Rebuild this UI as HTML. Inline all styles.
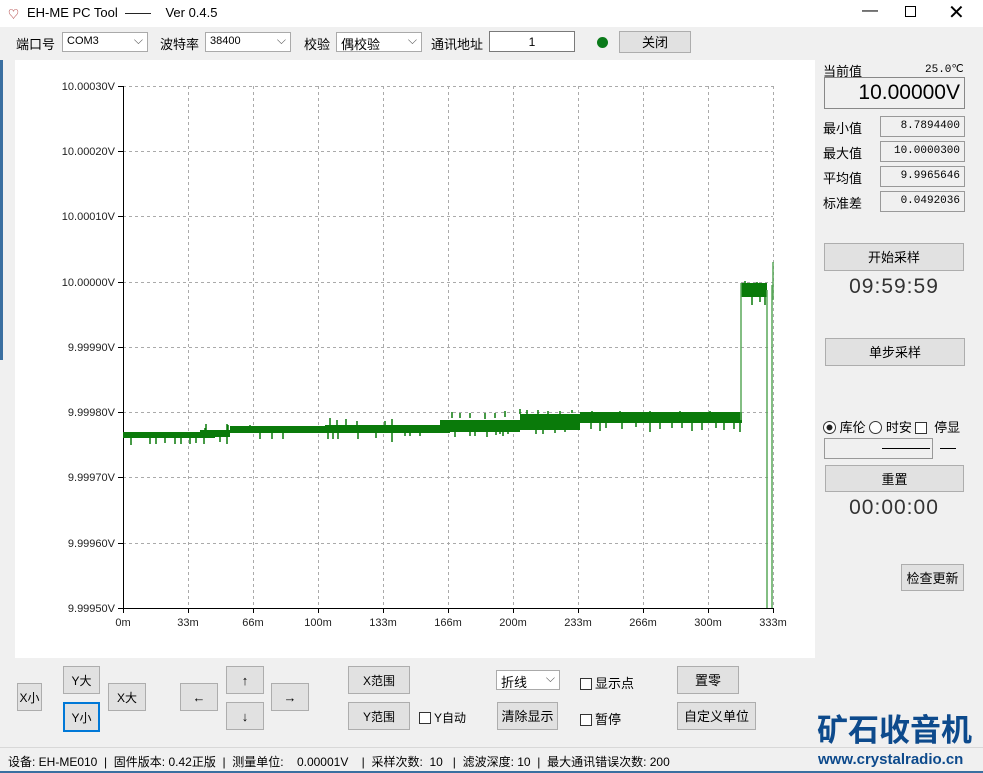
<!DOCTYPE html>
<html><head><meta charset="utf-8"><style>
*{margin:0;padding:0;box-sizing:border-box}
html,body{width:983px;height:773px;overflow:hidden}
body{background:#f0f0f0;font-family:"Liberation Sans","Noto Sans CJK SC",sans-serif;font-size:13px;color:#000;position:relative}
.a{position:absolute}
.btn{position:absolute;background:#e1e1e1;border:1px solid #adadad;text-align:center;font-size:13px;line-height:1}
.sel{position:absolute;background:#fff;border:1px solid #aaa;height:20px;font-size:11px;padding:2px 4px}
.sel:after{content:"⌵";position:absolute;right:4px;top:0;color:#555;font-size:12px}
.box{position:absolute;background:#f0f0f0;border:1px solid #999;text-align:right;font-family:"Liberation Mono",monospace;font-size:11px;padding:3px 4px}
.cb{display:inline-block;width:12px;height:12px;border:1px solid #333;background:#fff;vertical-align:-2px;margin-right:3px}
</style></head><body>
<div class="a" style="left:0;top:0;width:983px;height:27px;background:#fff"></div>
<div class="a" style="left:8px;top:6px;font-size:11px;color:#a33">♡</div>
<div class="a" style="left:27px;top:5px;font-size:13px">EH-ME PC Tool &nbsp;—— &nbsp;&nbsp;&nbsp;Ver 0.4.5</div>
<div class="a" style="left:862px;top:2px;font-size:16px">—</div>
<div class="a" style="left:905px;top:6px;width:11px;height:11px;border:1px solid #000"></div>
<div class="a" style="left:948px;top:0px;font-size:20px;font-weight:300">✕</div>
<div class="a" style="left:0;top:60px;width:3px;height:300px;background:#3a6fa0"></div>
<div class="a" style="left:0;top:771px;width:983px;height:2px;background:#3a6fa0"></div>

<div class="a" style="left:16px;top:34px">端口号</div>
<div class="sel" style="left:62px;top:32px;width:86px">COM3</div>
<div class="a" style="left:160px;top:34px">波特率</div>
<div class="sel" style="left:205px;top:32px;width:86px">38400</div>
<div class="a" style="left:304px;top:34px">校验</div>
<div class="sel" style="left:336px;top:32px;width:86px;font-size:13px;padding-top:1px">偶校验</div>
<div class="a" style="left:431px;top:34px">通讯地址</div>
<div class="a" style="left:489px;top:31px;width:86px;height:21px;background:#fff;border:1px solid #7a7a7a;text-align:center;font-size:12px;padding-top:3px">1</div>
<div class="a" style="left:597px;top:37px;width:11px;height:11px;border-radius:50%;background:#0a7a1a"></div>
<div class="btn" style="left:619px;top:31px;width:72px;height:22px;padding-top:4px">关闭</div>

<div class="a" style="left:15px;top:60px;width:800px;height:598px;background:#fff"></div>
<svg class="a" style="left:0;top:0" width="815" height="660">
<g stroke="#aaa" stroke-dasharray="3,3" stroke-width="1">
<line x1="123" y1="86.5" x2="773" y2="86.5"/><line x1="123" y1="151.5" x2="773" y2="151.5"/><line x1="123" y1="216.5" x2="773" y2="216.5"/><line x1="123" y1="282.5" x2="773" y2="282.5"/><line x1="123" y1="347.5" x2="773" y2="347.5"/><line x1="123" y1="412.5" x2="773" y2="412.5"/><line x1="123" y1="477.5" x2="773" y2="477.5"/><line x1="123" y1="543.5" x2="773" y2="543.5"/>
<line x1="188.5" y1="86" x2="188.5" y2="608"/><line x1="253.5" y1="86" x2="253.5" y2="608"/><line x1="318.5" y1="86" x2="318.5" y2="608"/><line x1="383.5" y1="86" x2="383.5" y2="608"/><line x1="448.5" y1="86" x2="448.5" y2="608"/><line x1="513.5" y1="86" x2="513.5" y2="608"/><line x1="578.5" y1="86" x2="578.5" y2="608"/><line x1="643.5" y1="86" x2="643.5" y2="608"/><line x1="708.5" y1="86" x2="708.5" y2="608"/><line x1="773.5" y1="86" x2="773.5" y2="608"/>
</g>
<g stroke="#000"><line x1="123.5" y1="86" x2="123.5" y2="608"/><line x1="123" y1="608.5" x2="774" y2="608.5"/>
<path d="M118 86.5h5M118 151.5h5M118 216.5h5M118 282.5h5M118 347.5h5M118 412.5h5M118 477.5h5M118 543.5h5M118 608.5h5M123.5 608v5M188.5 608v5M253.5 608v5M318.5 608v5M383.5 608v5M448.5 608v5M513.5 608v5M578.5 608v5M643.5 608v5M708.5 608v5M773.5 608v5"/></g>
<g font-size="11" fill="#222" text-anchor="end" font-family="Liberation Sans">
<text x="115" y="90">10.00030V</text><text x="115" y="155">10.00020V</text><text x="115" y="220">10.00010V</text><text x="115" y="286">10.00000V</text><text x="115" y="351">9.99990V</text><text x="115" y="416">9.99980V</text><text x="115" y="481">9.99970V</text><text x="115" y="547">9.99960V</text><text x="115" y="612">9.99950V</text></g>
<g font-size="11" fill="#222" text-anchor="middle" font-family="Liberation Sans">
<text x="123" y="626">0m</text><text x="188" y="626">33m</text><text x="253" y="626">66m</text><text x="318" y="626">100m</text><text x="383" y="626">133m</text><text x="448" y="626">166m</text><text x="513" y="626">200m</text><text x="578" y="626">233m</text><text x="643" y="626">266m</text><text x="708" y="626">300m</text><text x="773" y="626">333m</text></g>
<g fill="#0a7a0a">
<rect x="123" y="432" width="92" height="6"/><rect x="200" y="430" width="30" height="7"/>
<rect x="230" y="426" width="95" height="7"/><rect x="325" y="425" width="125" height="8"/>
<rect x="440" y="420" width="80" height="12"/><rect x="520" y="414" width="60" height="16"/><rect x="580" y="412" width="162" height="11"/>
<rect x="741" y="283" width="26" height="14"/>
</g>
<g stroke="#0a7a0a" stroke-width="1.5">
<path d="M131 437v8M150 437v7M156 437v7M165 437v6M175 437v7M181 437v7M190 437v7M196 437v6M204 437v7M220 437v5M227 437v7M205 436v-8M206 430v-6M227 432v-8M250 430v-5M260 433v6M272 433v6M283 433v6M228 433v-8M328 433v6M333 433v6M338 432v7M358 433v6M376 433v5M392 433v9M392 425v-6M405 432v4M410 432v4M420 432v4M330 426v-8M337 426v-6M346 426v-7M357 426v-5M385 425v-4M470 430v6M455 431v6M475 431v5M487 430v7M496 430v5M503 430v6M500 430v4M508 430v4M536 429v5M543 428v6M555 428v5M565 428v4M452 418v-6M460 418v-5M470 418v-5M485 419v-6M495 418v-5M505 417v-6M520 414v-5M527 414v-4M538 414v-4M548 414v-3M560 414v-3M572 413v-3M591 423v6M600 423v8M606 423v5M622 423v6M636 423v4M650 423v9M660 423v6M672 423v5M682 423v5M692 423v8M702 423v7M716 423v5M724 423v7M734 423v6M740 423v9M592 411v3M620 411v3M650 411v3M680 411v3M710 411v3M752 297v8M760 297v5M765 297v8M745 284v-3M757 284v-2"/>
</g>
<g stroke="#5aa85a" stroke-width="1.5" fill="none">
<path d="M741 420V283M767 290V608M772 285V608M773 262V300"/></g>
</svg>

<div class="a" style="left:823px;top:61px">当前值</div>
<div class="a" style="left:925px;top:62px;font-size:11px;font-family:'Liberation Mono',monospace">25.0℃</div>
<div class="a" style="left:824px;top:77px;width:141px;height:32px;border:1px solid #888;font-size:21px;text-align:right;padding:3px 4px 0 0">10.00000V</div>
<div class="a" style="left:823px;top:118px">最小值</div><div class="box" style="left:880px;top:116px;width:85px;height:21px">8.7894400</div>
<div class="a" style="left:823px;top:143px">最大值</div><div class="box" style="left:880px;top:141px;width:85px;height:21px">10.0000300</div>
<div class="a" style="left:823px;top:168px">平均值</div><div class="box" style="left:880px;top:166px;width:85px;height:21px">9.9965646</div>
<div class="a" style="left:823px;top:193px">标准差</div><div class="box" style="left:880px;top:191px;width:85px;height:21px">0.0492036</div>
<div class="btn" style="left:824px;top:243px;width:140px;height:28px;padding-top:7px">开始采样</div>
<div class="a" style="left:824px;top:275px;width:140px;text-align:center;font-size:21px;color:#333;letter-spacing:1px">09:59:59</div>
<div class="btn" style="left:825px;top:338px;width:140px;height:28px;padding-top:7px">单步采样</div>
<div class="a" style="left:823px;top:417px;font-size:13px"><span style="display:inline-block;width:13px;height:13px;border:1px solid #333;border-radius:50%;background:radial-gradient(#222 35%,#fff 40%);vertical-align:-2px"></span> 库伦 <span style="display:inline-block;width:13px;height:13px;border:1px solid #333;border-radius:50%;vertical-align:-2px;background:#fff"></span> 时安 <span class="cb"></span> 停显</div>
<div class="a" style="left:824px;top:438px;width:109px;height:21px;border:1px solid #999"></div>
<div class="a" style="left:882px;top:448px;width:48px;border-top:1px solid #000"></div>
<div class="a" style="left:940px;top:448px;width:16px;border-top:1px solid #000"></div>
<div class="btn" style="left:825px;top:465px;width:139px;height:27px;padding-top:7px">重置</div>
<div class="a" style="left:824px;top:496px;width:140px;text-align:center;font-size:21px;color:#333;letter-spacing:1px">00:00:00</div>
<div class="btn" style="left:901px;top:564px;width:63px;height:27px;padding-top:7px">检查更新</div>

<div class="btn" style="left:17px;top:683px;width:25px;height:28px;padding-top:8px;font-size:12px">X小</div>
<div class="btn" style="left:63px;top:666px;width:37px;height:28px;padding-top:8px;font-size:12px">Y大</div>
<div class="btn" style="left:63px;top:702px;width:37px;height:30px;padding-top:8px;font-size:12px;border:2px solid #0078d7">Y小</div>
<div class="btn" style="left:108px;top:683px;width:38px;height:28px;padding-top:8px;font-size:12px">X大</div>
<div class="btn" style="left:180px;top:683px;width:38px;height:28px;padding-top:7px">←</div>
<div class="btn" style="left:226px;top:666px;width:38px;height:28px;padding-top:7px">↑</div>
<div class="btn" style="left:226px;top:702px;width:38px;height:28px;padding-top:7px">↓</div>
<div class="btn" style="left:271px;top:683px;width:38px;height:28px;padding-top:7px">→</div>
<div class="btn" style="left:348px;top:666px;width:62px;height:28px;padding-top:8px;font-size:12px">X范围</div>
<div class="btn" style="left:348px;top:702px;width:62px;height:28px;padding-top:8px;font-size:12px">Y范围</div>
<div class="a" style="left:419px;top:709px;font-size:12px"><span class="cb"></span>Y自动</div>
<div class="sel" style="left:496px;top:670px;width:64px;font-size:13px;padding-top:1px">折线</div>
<div class="a" style="left:580px;top:673px"><span class="cb"></span>显示点</div>
<div class="btn" style="left:497px;top:702px;width:61px;height:28px;padding-top:7px">清除显示</div>
<div class="a" style="left:580px;top:709px"><span class="cb"></span>暂停</div>
<div class="btn" style="left:677px;top:666px;width:62px;height:28px;padding-top:7px">置零</div>
<div class="btn" style="left:677px;top:702px;width:79px;height:28px;padding-top:7px">自定义单位</div>

<div class="a" style="left:817px;top:708px;font-size:31px;font-weight:bold;color:#0d4a8c;white-space:nowrap;font-family:'Noto Sans CJK SC',sans-serif;line-height:40px;letter-spacing:0">矿石收音机</div>
<div class="a" style="left:0;top:747px;width:983px;border-top:1px solid #d8d8d8"></div>
<div class="a" style="left:818px;top:751px;font-size:15px;font-weight:bold;color:#0d4a8c;white-space:nowrap;font-family:'Liberation Sans',sans-serif">www.crystalradio.cn</div>
<div class="a" style="left:8px;top:753px;font-size:12px;white-space:nowrap">设备: EH-ME010 &nbsp;| &nbsp;固件版本: 0.42正版 &nbsp;| &nbsp;测量单位: &nbsp;&nbsp;&nbsp;0.00001V &nbsp;&nbsp;&nbsp;| &nbsp;采样次数: &nbsp;10 &nbsp;&nbsp;| &nbsp;滤波深度: 10 &nbsp;| &nbsp;最大通讯错误次数: 200</div>
</body></html>
